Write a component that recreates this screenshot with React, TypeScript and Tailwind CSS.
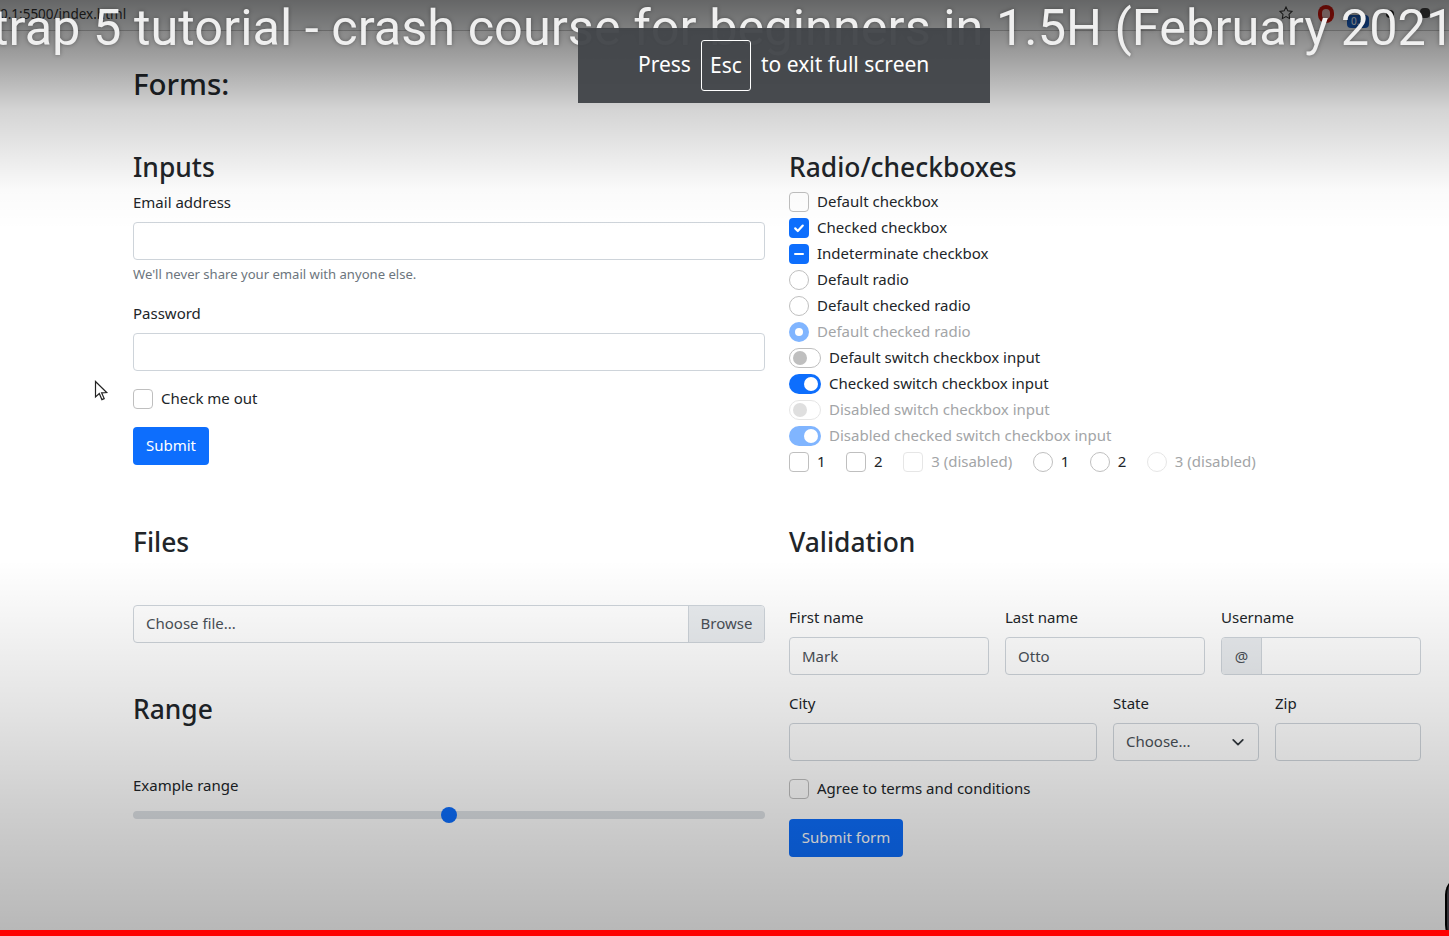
import React from "react";

const font = "font-['Noto_Sans','Open_Sans',sans-serif]";

function Box({ kind, state = "off", disabled = false }: { kind: "check" | "radio"; state?: "off" | "on" | "mixed"; disabled?: boolean }) {
  const shape = kind === "check" ? "rounded-[4px]" : "rounded-full";
  if (state === "off") {
    return <span className={`w-5 h-5 shrink-0 border bg-white ${shape} ${disabled ? "border-[#e6e6e6]" : "border-[#bfbfbf]"}`} />;
  }
  if (kind === "radio") {
    return (
      <span className="w-5 h-5 shrink-0 rounded-full bg-[#80b5ff] flex items-center justify-center">
        <span className="w-2 h-2 rounded-full bg-white" />
      </span>
    );
  }
  return (
    <span className={`w-5 h-5 shrink-0 ${shape} bg-[#0d6efd] flex items-center justify-center`}>
      {state === "on" ? (
        <svg width="12" height="12" viewBox="0 0 12 12" fill="none" stroke="white" strokeWidth="2.2" strokeLinecap="round" strokeLinejoin="round">
          <path d="M2.2 6.4 4.8 9 9.8 3.6" />
        </svg>
      ) : (
        <span className="w-2.5 h-0.5 rounded-full bg-white" />
      )}
    </span>
  );
}

function Row({ children, muted = false, box }: { children: React.ReactNode; muted?: boolean; box: React.ReactNode }) {
  return (
    <div className={`flex items-center gap-2 h-6 mb-0.5 ${muted ? "text-[#a3a5a7]" : ""}`}>
      {box}
      <span className="-mt-px">{children}</span>
    </div>
  );
}

function Switch({ on = false, disabled = false }: { on?: boolean; disabled?: boolean }) {
  const track = on
    ? disabled ? "bg-[#80b5ff] justify-end" : "bg-[#0d6efd] justify-end"
    : disabled ? "bg-white border border-[#e6e6e6] justify-start" : "bg-white border border-[#bfbfbf] justify-start";
  const dot = on ? "bg-white" : disabled ? "bg-[#dfdfdf]" : "bg-[#bfbfbf]";
  return (
    <span className={`w-8 h-5 shrink-0 rounded-full flex items-center px-[3px] ${track}`}>
      <span className={`w-3.5 h-3.5 rounded-full ${dot}`} />
    </span>
  );
}

function Label({ children }: { children: React.ReactNode }) {
  return <label className="block h-6 leading-[24px] mb-2">{children}</label>;
}

function TextInput({ value = "" }: { value?: string }) {
  return (
    <input
      readOnly
      value={value}
      className="block w-full h-[38px] px-3 pb-px border border-[#ced4da] rounded-[4px] bg-white text-[#495057] outline-none"
    />
  );
}

function Heading({ children }: { children: React.ReactNode }) {
  return <h3 className="text-[26.4px] leading-[34px] font-medium text-[#212529]">{children}</h3>;
}

function InlineOption({ kind, label, disabled = false }: { kind: "check" | "radio"; label: string; disabled?: boolean }) {
  return (
    <div className={`flex items-center gap-2 mr-[20.5px] ${disabled ? "text-[#a3a5a7]" : ""}`}>
      <Box kind={kind} disabled={disabled} />
      <span className="-mt-px">{label}</span>
    </div>
  );
}

export default function App() {
  return (
    <div className={`relative h-[936px] overflow-hidden bg-white text-[#212529] text-[15px] ${font}`}>
      {/* page */}
      <main className="pt-[65px] px-[133px] pr-7">
        <h2 className="text-[29.5px] leading-[38px] font-medium mb-[47px]">Forms:</h2>
        <div className="grid grid-cols-2 gap-x-6">
          <section>
            <div className="mb-1.5"><Heading>Inputs</Heading></div>
            <Label>Email address</Label>
            <TextInput />
            <p className="mt-1 mb-4 h-[21px] leading-[21px] text-[13.1px] text-[#6c757d]">We'll never share your email with anyone else.</p>
            <Label>Password</Label>
            <TextInput />
            <div className="mt-4 mb-4 flex items-center gap-2 h-6">
              <Box kind="check" />
              <span className="-mt-px">Check me out</span>
            </div>
            <button className="h-[38px] w-[76px] pb-px rounded-[4px] bg-[#0d6efd] text-white">Submit</button>

            <div className="mt-[60px] mb-[46px]"><Heading>Files</Heading></div>
            <div className="flex h-[38px] border border-[#ced4da] rounded-[4px] overflow-hidden bg-white text-[#495057]">
              <span className="flex-1 px-3 pb-px flex items-center">Choose file...</span>
              <span className="w-[76px] pb-px flex items-center justify-center bg-[#e9ecef] border-l border-[#ced4da]">Browse</span>
            </div>

            <div className="mt-[49px] mb-[47px]"><Heading>Range</Heading></div>
            <Label>Example range</Label>
            <div className="relative h-4 mt-2.5 flex items-center justify-center">
              <div className="w-full h-2 rounded-full bg-[#dee2e6]" />
              <div className="absolute w-4 h-4 rounded-full bg-[#0d6efd]" />
            </div>
          </section>

          <section>
            <div className="mb-1.5"><Heading>Radio/checkboxes</Heading></div>
            <Row box={<Box kind="check" />}>Default checkbox</Row>
            <Row box={<Box kind="check" state="on" />}>Checked checkbox</Row>
            <Row box={<Box kind="check" state="mixed" />}>Indeterminate checkbox</Row>
            <Row box={<Box kind="radio" />}>Default radio</Row>
            <Row box={<Box kind="radio" />}>Default checked radio</Row>
            <Row muted box={<Box kind="radio" state="on" />}>Default checked radio</Row>
            <Row box={<Switch />}>Default switch checkbox input</Row>
            <Row box={<Switch on />}>Checked switch checkbox input</Row>
            <Row muted box={<Switch disabled />}>Disabled switch checkbox input</Row>
            <Row muted box={<Switch on disabled />}>Disabled checked switch checkbox input</Row>
            <div className="flex h-6">
              <InlineOption kind="check" label="1" />
              <InlineOption kind="check" label="2" />
              <InlineOption kind="check" label="3 (disabled)" disabled />
              <InlineOption kind="radio" label="1" />
              <InlineOption kind="radio" label="2" />
              <InlineOption kind="radio" label="3 (disabled)" disabled />
            </div>

            <div className="mt-[51px] mb-[46px]"><Heading>Validation</Heading></div>
            <div className="grid grid-cols-3 gap-4">
              <div>
                <Label>First name</Label>
                <TextInput value="Mark" />
              </div>
              <div>
                <Label>Last name</Label>
                <TextInput value="Otto" />
              </div>
              <div>
                <Label>Username</Label>
                <div className="flex h-[38px] border border-[#ced4da] rounded-[4px] overflow-hidden bg-white text-[#495057]">
                  <span className="w-10 flex items-center justify-center bg-[#e9ecef] border-r border-[#ced4da]">@</span>
                </div>
              </div>
            </div>
            <div className="grid grid-cols-[308px_146px_146px] gap-4 mt-4">
              <div>
                <Label>City</Label>
                <TextInput />
              </div>
              <div>
                <Label>State</Label>
                <div className="flex items-center justify-between h-[38px] pl-3 pr-[13px] pb-px border border-[#ced4da] rounded-[4px] bg-white text-[#495057]">
                  <span>Choose...</span>
                  <svg width="14" height="14" viewBox="0 0 16 16" fill="none" stroke="#343a40" strokeWidth="2" strokeLinecap="round" strokeLinejoin="round">
                    <path d="M2.500 5.500l5.500 5.500 5.500-5.500" />
                  </svg>
                </div>
              </div>
              <div>
                <Label>Zip</Label>
                <TextInput />
              </div>
            </div>
            <div className="mt-4 flex items-center gap-2 h-6">
              <Box kind="check" />
              <span className="-mt-px">Agree to terms and conditions</span>
            </div>
            <button className="mt-[18px] h-[38px] w-[114px] pb-px rounded-[4px] bg-[#0d6efd] text-white">Submit form</button>
          </section>
        </div>
      </main>

      {/* browser chrome visible beneath the video controls */}
      <div className="absolute top-0 inset-x-0 h-[31px] bg-[#f1f3f4] border-b border-[#c4c4c4] pointer-events-none">
        <span className="absolute left-0 top-1 text-[13.5px] text-[#333]">0.1:5500/index.html</span>
        <svg className="absolute left-[1278px] top-[5px]" width="16" height="16" viewBox="0 0 24 24" fill="none" stroke="#333" strokeWidth="1.6">
          <path d="M12 3l2.8 5.8 6.2.9-4.500 4.400 1 6.300-5.500-3-5.500 3 1-6.300L3 9.700l6.200-.9z" />
        </svg>
        <span className="absolute left-[1318px] top-[5px] w-4 h-[18px] rounded-full bg-[#d8160c] flex items-center justify-center">
          <span className="w-2 h-2.5 rounded-sm bg-[#f3c9c6]" />
        </span>
        <span className="absolute left-[1347px] top-[15px] w-[22px] h-[13px] rounded-sm bg-[#1a5fc4] text-white text-[10px] leading-[13px] text-center">0.5</span>
        <span className="absolute left-[1386px] top-[10px] w-2 h-2 rounded-sm bg-[#222]" />
        <span className="absolute left-[1420px] top-[8px] w-2.5 h-2.5 rounded-sm bg-[#444]" />
      </div>

      {/* player shade */}
      <div className="absolute inset-0 pointer-events-none bg-[linear-gradient(to_bottom,rgba(0,0,0,0.58)_0px,rgba(0,0,0,0.47)_30px,rgba(0,0,0,0.32)_70px,rgba(0,0,0,0.17)_110px,rgba(0,0,0,0.02)_190px,rgba(0,0,0,0)_230px,rgba(0,0,0,0)_560px,rgba(0,0,0,0.1)_700px,rgba(0,0,0,0.2)_820px,rgba(0,0,0,0.28)_930px)]" />

      {/* player title */}
      <div className="absolute top-[-2px] left-[-8px] whitespace-nowrap text-[50.5px] leading-[60px] text-[#efefef] font-['Roboto',sans-serif] [text-shadow:0_0_4px_rgba(0,0,0,0.35)]">
        trap 5 tutorial - crash course for beginners in 1.5H (February 2021
      </div>

      {/* exit full screen toast */}
      <div className="absolute left-[578px] top-[28px] w-[412px] h-[75px] bg-[rgba(66,69,73,0.96)] flex items-center pl-[60px] text-white text-[21px]">
        <span className="w-[63px] -mt-px">Press</span>
        <span className="w-[50px] h-[51px] mr-2.5 border border-white rounded-[3px] flex items-center justify-center">Esc</span>
        <span className="-mt-px">to exit full screen</span>
      </div>

      {/* mouse cursor */}
      <svg className="absolute left-[94px] top-[380px]" width="15" height="22" viewBox="0 0 15 22" fill="white" stroke="#222" strokeWidth="1.2">
        <path d="M1.500 1.500v15.500l3.800-3.400 2.600 6 2.300-1-2.600-5.800 5.100-.3z" />
      </svg>

      {/* presenter's webcam edge */}
      <div className="absolute left-[1445px] top-[875px] w-10 h-[70px] rounded-full bg-[#36343a] border-l-2 border-black" />

      {/* progress bar */}
      <div className="absolute bottom-0 inset-x-0 h-1.5 bg-[#ff0000]" />
    </div>
  );
}
